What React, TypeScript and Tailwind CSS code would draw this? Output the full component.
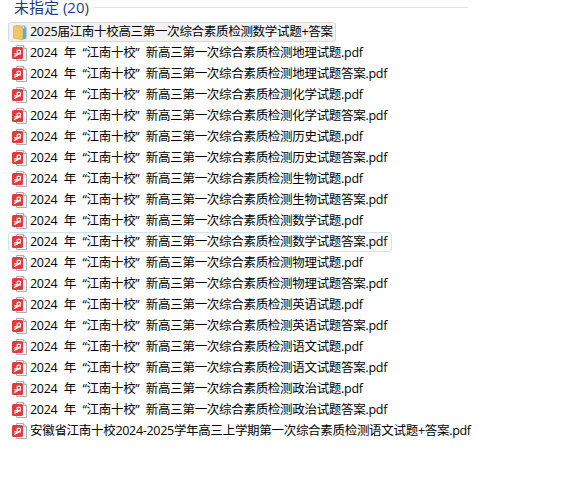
const FONT = "font-['Open_Sans','Noto_Sans_CJK_SC',sans-serif]";

const subjects = ["地理", "化学", "历史", "生物", "数学", "物理", "英语", "语文", "政治"];
const files: string[] = [];
for (const s of subjects) {
  files.push(`2024 年 “江南十校” 新高三第一次综合素质检测${s}试题.pdf`);
  files.push(`2024 年 “江南十校” 新高三第一次综合素质检测${s}试题答案.pdf`);
}

function FolderIcon() {
  return (
    <svg width="16" height="17" viewBox="0 0 16 17" className="shrink-0">
      <path d="M4 1.5H13.5V13.5H4z" fill="#8db8dc" />
      <path d="M5 2.5H12V12H5z" fill="#f6f6ee" />
      <path d="M11 4.5L14.5 3V14.5L11 15.5z" fill="#6fa5d2" />
      <path d="M1.5 2.5L4.5 1.5L10.5 3V16L1.5 14z" fill="#efc85f" stroke="#d3a640" strokeWidth="0.6" />
    </svg>
  );
}

function PdfIcon() {
  return (
    <svg width="16" height="16" viewBox="0 0 16 16" className="shrink-0">
      <path d="M4.5 0.5H11.5L14.5 3.5V15.5H4.5Z" fill="#fdfdfd" stroke="#a9adb5" />
      <path d="M11.5 0.5V3.5H14.5" fill="#e8eaee" stroke="#a9adb5" />
      <rect x="0" y="2" width="11" height="12" rx="1.5" fill="#e5393c" />
      <path d="M2 11.5C4.5 10.5 8.6 9 8.6 6.6C8.6 4.6 5 4.6 5 6.6C5 8.4 6.8 9 9 8.8M2.2 8.8H6" fill="none" stroke="#fff" strokeWidth="1.2" />
    </svg>
  );
}

function Row({ name, tone, folder }: { name: string; tone?: "folder" | "focus"; folder?: boolean }) {
  const box =
    tone === "folder"
      ? "border-[#d9d9d9] bg-[#f2f2f2] pr-[2px]"
      : tone === "focus"
        ? "border-[#cfe3f7] bg-[#fbfdff] pr-[4px]"
        : "border-transparent";
  return (
    <div className={`mt-px flex h-[20px] w-fit items-center gap-[2px] rounded-[3px] border pl-[3px] ${box}`}>
      {folder ? <FolderIcon /> : <PdfIcon />}
      <span className="whitespace-pre text-[12.5px] leading-[18px] tracking-[-0.3px] text-black [word-spacing:3.5px]">{name}</span>
    </div>
  );
}

export default function App() {
  return (
    <div className={`h-[492px] w-[569px] overflow-hidden bg-white ${FONT}`}>
      <div className="flex h-[21px] items-start pl-[14px] pr-[101px]">
        <span className="whitespace-pre text-[15px] leading-[14px] text-[#1e3a8a]">未指定 (20)</span>
        <div className="ml-[5px] mt-[7px] h-px flex-1 bg-[#e3e3e3]" />
      </div>
      <div className="flex flex-col pl-[8px]">
        <Row name="2025届江南十校高三第一次综合素质检测数学试题+答案" tone="folder" folder />
        {files.map((f, i) => (
          <Row key={f} name={f} tone={i === 9 ? "focus" : undefined} />
        ))}
        <Row name="安徽省江南十校2024-2025学年高三上学期第一次综合素质检测语文试题+答案.pdf" />
      </div>
    </div>
  );
}
